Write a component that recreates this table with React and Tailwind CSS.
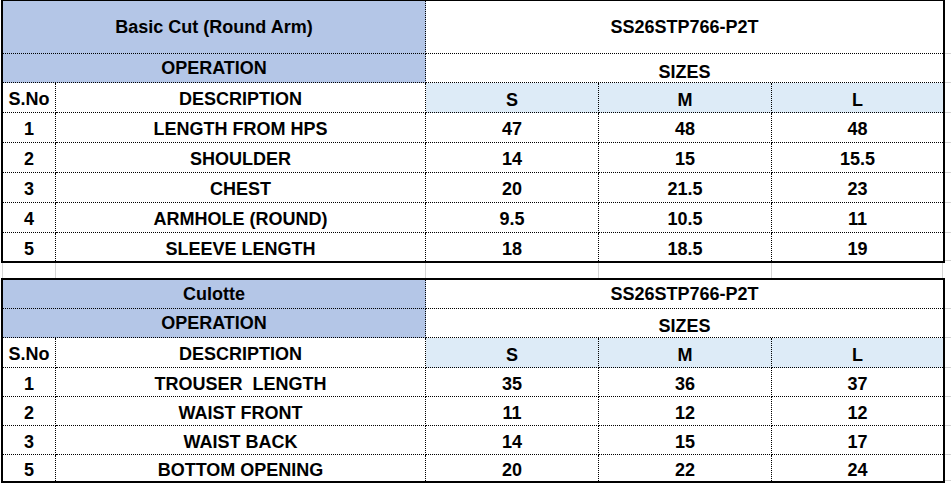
import React from "react";

const COLS = "grid grid-cols-[53px_370px_173px_173px_171px]";
const WIDTHS = [53, 370, 173, 173, 171];

const sheets = [
  {
    title: "Basic Cut (Round Arm)",
    code: "SS26STP766-P2T",
    head: [53, 29, 30],
    sizesPad: "pt-2",
    rows: [
      ["1", "LENGTH FROM HPS", "47", "48", "48", 30],
      ["2", "SHOULDER", "14", "15", "15.5", 30],
      ["3", "CHEST", "20", "21.5", "23", 30],
      ["4", "ARMHOLE (ROUND)", "9.5", "10.5", "11", 30],
      ["5", "SLEEVE LENGTH", "18", "18.5", "19", 28],
    ],
  },
  {
    title: "Culotte",
    code: "SS26STP766-P2T",
    head: [29, 29, 30],
    sizesPad: "pt-[5px]",
    rows: [
      ["1", "TROUSER  LENGTH", "35", "36", "37", 29],
      ["2", "WAIST FRONT", "11", "12", "12", 29],
      ["3", "WAIST BACK", "14", "15", "17", 29],
      ["5", "BOTTOM OPENING", "20", "22", "24", 26],
    ],
  },
];

function Cell({ children, className = "", h, last, edge }) {
  return (
    <div
      style={{ height: h }}
      className={`flex items-center justify-center whitespace-pre border-dotted border-black ${
        last ? "" : "border-b"
      } ${edge ? "" : "border-r"} ${className}`}
    >
      {children}
    </div>
  );
}

function Sheet({ s }) {
  const heights = [...s.head, ...s.rows.map((r) => r[5])];
  return (
    <div className="flex">
      <div className="w-[944px] border-2 border-black">
        <div className={COLS}>
          {/* header rows */}
          <Cell h={s.head[0]} className="col-span-2 bg-[#b4c6e7]">
            {s.title}
          </Cell>
          <Cell h={s.head[0]} edge className="col-span-3">
            {s.code}
          </Cell>
          <Cell h={s.head[1]} className="col-span-2 bg-[#b4c6e7]">
            OPERATION
          </Cell>
          <Cell h={s.head[1]} edge className={`col-span-3 ${s.sizesPad}`}>
            SIZES
          </Cell>
          <Cell h={s.head[2]} className="pt-[2px]">S.No</Cell>
          <Cell h={s.head[2]} className="pt-[2px]">DESCRIPTION</Cell>
          <Cell h={s.head[2]} className="bg-[#ddebf7] pt-[4px]">S</Cell>
          <Cell h={s.head[2]} className="bg-[#ddebf7] pt-[4px]">M</Cell>
          <Cell h={s.head[2]} edge className="bg-[#ddebf7] pt-[4px]">L</Cell>

          {/* measurement rows */}
          {s.rows.map((r, i) => {
            const last = i === s.rows.length - 1;
            return (
              <React.Fragment key={i}>
                <Cell h={r[5]} last={last} className="pt-[3px]">{r[0]}</Cell>
                <Cell h={r[5]} last={last} className="pt-[3px]">{r[1]}</Cell>
                <Cell h={r[5]} last={last} className="pt-[3px]">{r[2]}</Cell>
                <Cell h={r[5]} last={last} className="pt-[3px]">{r[3]}</Cell>
                <Cell h={r[5]} last={last} edge className="pt-[3px]">{r[4]}</Cell>
              </React.Fragment>
            );
          })}
        </div>
      </div>
      {/* sheet gridlines past the right edge */}
      <div className="w-[6px] pt-[2px]">
        {heights.map((h, i) => (
          <div key={i} style={{ height: h }} className="border-b border-[#d4d4d4]" />
        ))}
      </div>
    </div>
  );
}

export default function App() {
  return (
    <div
      className="w-[951px] h-[484px] overflow-hidden bg-white text-black font-bold text-[18px] leading-none"
      style={{ fontFamily: '"Liberation Sans", Arial, sans-serif' }}
    >
      <div className="-mt-px ml-px">
        <Sheet s={sheets[0]} />
      </div>
      {/* empty spreadsheet row between tables */}
      <div className="ml-[2px] flex h-[15px] border-l border-[#d4d4d4]">
        {WIDTHS.map((w, i) => (
          <div key={i} style={{ width: w }} className="border-r border-[#d4d4d4]" />
        ))}
      </div>
      <div className="ml-px">
        <Sheet s={sheets[1]} />
      </div>
    </div>
  );
}
